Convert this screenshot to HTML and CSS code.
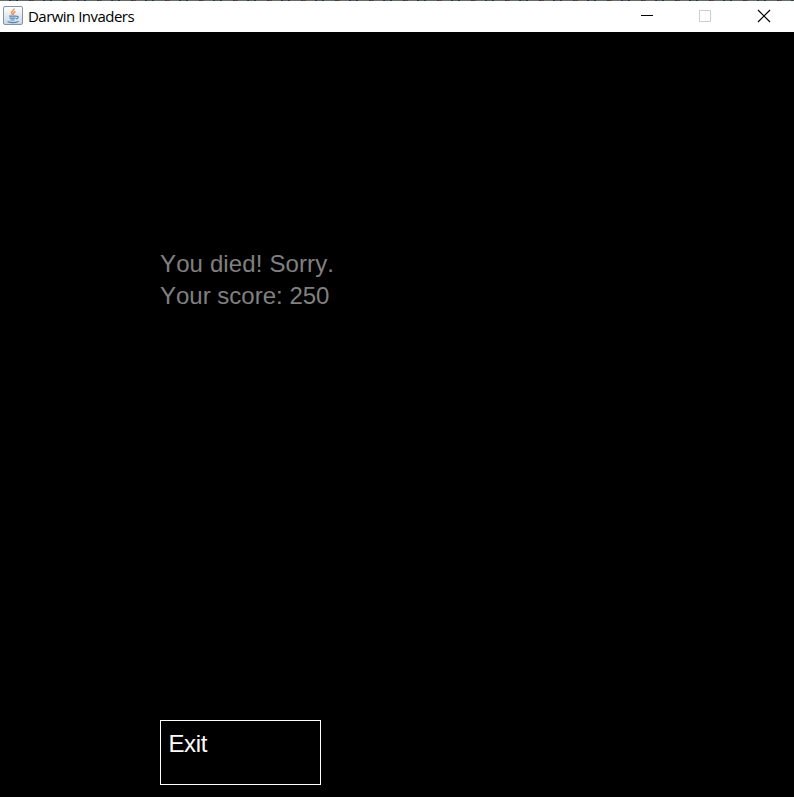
FILE: index.html
```html
<!DOCTYPE html>
<html lang="en">
<head>
<meta charset="utf-8">
<title>Darwin Invaders</title>
<link rel="stylesheet" href="styles.css">
</head>
<body>
<div class="window">
  <div class="backdrop-edge"></div>
  <header class="titlebar">
    <svg class="app-icon" width="20" height="20" viewBox="0 0 20 20">
      <defs><linearGradient id="tile" x1="0" y1="0" x2="0" y2="1"><stop offset="0" stop-color="#fff"/><stop offset="1" stop-color="#cbd6e4"/></linearGradient></defs>
      <rect x=".5" y=".5" width="19" height="18" rx="1.500" fill="url(#tile)" stroke="#8394aa"/>
      <path d="M11 2.500c.5 2-3.500 3-2.500 4.500.5 1 1 1.200 1 2M12.500 5.500c-2 .8-2.500 1.500-1.500 3" fill="none" stroke="#ee914f" stroke-width="1.500"/>
      <path d="M6 10.200h7.500M6.500 12.200h6M7.500 14h4M13.500 10.500c2.500-.5 2 2-.5 2.500M4.500 15.500c3 1.300 8 1.300 11 0" fill="none" stroke="#5386b3" stroke-width="1.200"/>
    </svg>
    <span class="title">Darwin Invaders</span>
    <div class="controls">
      <svg width="12" height="12" viewBox="0 0 12 12"><path d="M0 5.500h12" stroke="#000"/></svg>
      <svg width="12" height="12" viewBox="0 0 12 12"><path d="M.5.500h11v11H.500z" fill="none" stroke="#ccc"/></svg>
      <svg width="12" height="12" viewBox="0 0 12 12"><path d="M0 0l12 12M12 0L0 12" stroke="#000" stroke-width="1.200"/></svg>
    </div>
  </header>
  <main class="game">
    <div class="message"><p class="died">You died! Sorry.</p><p>Your score: 250</p></div>
    <button class="exit">Exit</button>
  </main>
</div>
</body>
</html>
```
FILE: styles.css
```css
* { box-sizing: border-box; }
body { margin: 0; background: #000; }
.window { height: 797px; display: flex; flex-direction: column; overflow: hidden; }
.backdrop-edge { height: 1px; background: repeating-linear-gradient(90deg, #66716c 0 9px, #30343c 9px 11px, #56636a 11px 16px, #402b3b 16px 18px, #626d65 18px 29px, #29404a 29px 31px, #654332 31px 34px); }
.titlebar { height: 31px; background: #fff; display: flex; align-items: center; padding: 0 24px 1px 3px; }
.app-icon { margin-right: 5px; }
.title { font: 15px/20px "Open Sans", sans-serif; letter-spacing: -0.53px; color: #000; }
.controls { margin-left: auto; display: flex; gap: 46px; }
.controls svg { overflow: visible; }
.controls svg:not(:last-child) { position: relative; left: -1px; }
.game { flex: 1; display: flex; flex-direction: column; align-items: flex-start; justify-content: space-between; padding: 216px 0 12px 160px; font: 24px/32px "Liberation Sans", sans-serif; font-kerning: none; }
.message { color: #808080; }
.message p { margin: 0; }
.message .died { letter-spacing: 0.13px; }
.exit { width: 161px; height: 65px; border: 1px solid #fff; background: #000; color: #fff; font: inherit; letter-spacing: -0.4px; text-align: left; padding: 0 7.500px 18px; }
```
